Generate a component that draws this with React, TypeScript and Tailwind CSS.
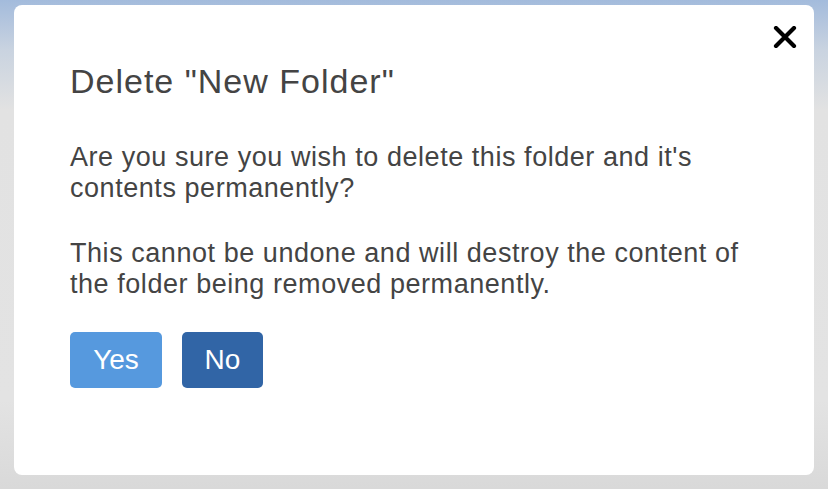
import React from "react";

export default function App() {
  return (
    <div className="w-[828px] h-[489px] overflow-hidden bg-[linear-gradient(to_bottom,#a3bbdc_0px,#c9d3e0_50px,#e2e2e2_110px,#e3e3e3_400px,#d9d9d9_489px)] pt-[5px] pl-[14px]" style={{ fontFamily: '"Liberation Sans", Arial, sans-serif' }}>
      <div className="relative w-[800px] h-[470px] bg-white rounded-[8px] pl-[56px] pr-[30px] pt-[56px]">
        <button className="absolute right-[16px] top-[17px] w-[26px] h-[30px] flex items-center justify-center">
          <svg width="24" height="22" viewBox="0 0 24 22">
            <path d="M3 2 L21 20 M21 2 L3 20" stroke="#000" strokeWidth="4.2" strokeLinecap="round" />
          </svg>
        </button>
        <h2 className="text-[34px] leading-[40px] tracking-[1px] text-[#444444]">Delete "New Folder"</h2>
        <p className="mt-[41px] text-[27px] leading-[31px] tracking-[0.55px] text-[#444444]">
          Are you sure you wish to delete this folder and it's<br />contents permanently?
        </p>
        <p className="mt-[34px] text-[27px] leading-[31px] tracking-[0.55px] text-[#444444]">
          This cannot be undone and will destroy the content of<br />the folder being removed permanently.
        </p>
        <div className="mt-[32px] flex gap-[20px]">
          <button className="w-[92px] h-[56px] rounded-[5px] bg-[#5699de] text-white text-[28px]">Yes</button>
          <button className="w-[81px] h-[56px] rounded-[5px] bg-[#3165a6] text-white text-[28px]">No</button>
        </div>
      </div>
    </div>
  );
}
